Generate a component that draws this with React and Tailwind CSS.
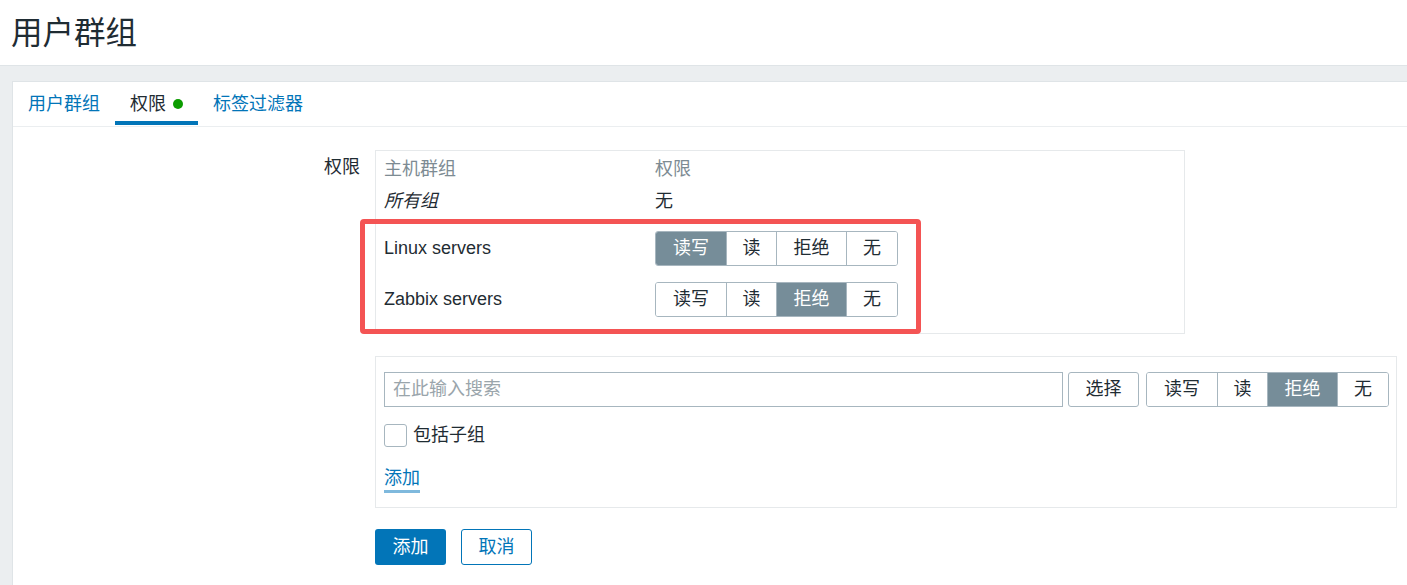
import React, { useState } from 'react';

const FONT = { fontFamily: '"Liberation Sans", "Noto Sans CJK SC", sans-serif' };

const LEVELS = [
  { key: 'rw', label: '读写', w: 'w-[70px]' },
  { key: 'r', label: '读', w: 'w-[50px]' },
  { key: 'deny', label: '拒绝', w: 'w-[70px]' },
  { key: 'none', label: '无', w: 'w-[51px]' },
];

const PermissionToggle = ({ value, onChange }) => (
  <div className="flex h-[35px] rounded-[3px] border border-[#a7b6bf] overflow-hidden">
    {LEVELS.map((lvl, i) => (
      <button
        key={lvl.key}
        onClick={() => onChange(lvl.key)}
        className={`${lvl.w} h-full flex items-center justify-center ${
          i > 0 ? 'border-l border-[#a7b6bf]' : ''
        } ${value === lvl.key ? 'bg-[#768d99] text-white' : 'bg-white text-[#1f2c33]'}`}
      >
        {lvl.label}
      </button>
    ))}
  </div>
);

const App = () => {
  const [rights, setRights] = useState({ linux: 'rw', zabbix: 'deny' });
  const [newRight, setNewRight] = useState('deny');
  const [subgroups, setSubgroups] = useState(false);

  return (
    <div style={FONT} className="min-h-[585px] bg-[#ebeef0] text-[#1f2c33] text-[18px] leading-[21px]">
      {/* page header */}
      <div className="h-[66px] bg-white border-b border-[#dfe4e7] flex items-center pl-[11px]">
        <h1 className="text-[31.5px] leading-[36px] font-normal">用户群组</h1>
      </div>

      <div className="pt-[15px] pl-[12px]">
        <div className="bg-white border-l border-t border-[#dfe4e7] min-h-[520px]">
          {/* tabs */}
          <div className="flex h-[45px] border-b border-[#ebeef0]">
            <div className="px-[15px] flex items-center text-[#0275b8]">用户群组</div>
            <div className="px-[15px] flex items-center relative">
              <span>权限</span>
              <span className="ml-[7px] w-[10px] h-[10px] rounded-full bg-[#0c9c00]" />
              <span className="absolute left-0 right-0 bottom-[1px] h-[4px] bg-[#0275b8]" />
            </div>
            <div className="px-[15px] flex items-center text-[#0275b8]">标签过滤器</div>
          </div>

          {/* form */}
          <div className="grid grid-cols-[347px_1fr] gap-x-[15px] pt-[23px]">
            <div className="text-right pt-[7px]">权限</div>
            <div>
              <div className="relative w-[810px] border border-[#e6e9eb] pt-[2px] pb-[8px] pl-[8px]">
                <div className="flex h-[32px] items-center text-[#7d8b93]">
                  <div className="w-[271px]">主机群组</div>
                  <div>权限</div>
                </div>
                <div className="flex h-[32px] items-center mb-[6px]">
                  <div className="w-[271px] italic">所有组</div>
                  <div>无</div>
                </div>
                <div className="flex h-[51px] items-center">
                  <div className="w-[271px]">Linux servers</div>
                  <PermissionToggle value={rights.linux} onChange={(v) => setRights({ ...rights, linux: v })} />
                </div>
                <div className="flex h-[51px] items-center">
                  <div className="w-[271px]">Zabbix servers</div>
                  <PermissionToggle value={rights.zabbix} onChange={(v) => setRights({ ...rights, zabbix: v })} />
                </div>
                {/* highlight frame */}
                <div className="absolute left-[-16px] top-[68px] w-[561px] h-[115px] border-[5px] border-[#f45454] rounded-[4px] pointer-events-none" />
              </div>

              <div className="mt-[22px] w-[1022px] border border-[#e6e9eb] pt-[15px] pb-[14px] pl-[8px] pr-[6px]">
                <div className="flex items-center">
                  <input
                    placeholder="在此输入搜索"
                    className="w-[679px] h-[35px] border border-[#a7b6bf] px-[8px] outline-none placeholder:text-[#9aa5ab]"
                  />
                  <button className="ml-[5px] w-[71px] h-[35px] border border-[#a7b6bf] rounded-[3px] bg-white">选择</button>
                  <div className="ml-[7px]">
                    <PermissionToggle value={newRight} onChange={setNewRight} />
                  </div>
                </div>
                <label className="mt-[17px] flex items-center cursor-pointer">
                  <span
                    onClick={() => setSubgroups(!subgroups)}
                    className="w-[23px] h-[23px] border border-[#a7b6bf] rounded-[3px] bg-white flex items-center justify-center text-[14px]"
                  >
                    {subgroups ? '✓' : ''}
                  </span>
                  <span className="ml-[6px]">包括子组</span>
                </label>
                <div className="mt-[21px]">
                  <a className="inline-block text-[#0275b8] border-b-[3px] border-[#7fb9dd] pb-[1px] leading-[21px] cursor-pointer">
                    添加
                  </a>
                </div>
              </div>

              <div className="mt-[21px] flex gap-[15px] pb-[20px]">
                <button className="w-[71px] h-[36px] rounded-[3px] bg-[#0275b8] text-white">添加</button>
                <button className="w-[71px] h-[36px] rounded-[3px] border border-[#0275b8] bg-white text-[#0275b8]">取消</button>
              </div>
            </div>
          </div>
        </div>
      </div>
    </div>
  );
};

export default App;
